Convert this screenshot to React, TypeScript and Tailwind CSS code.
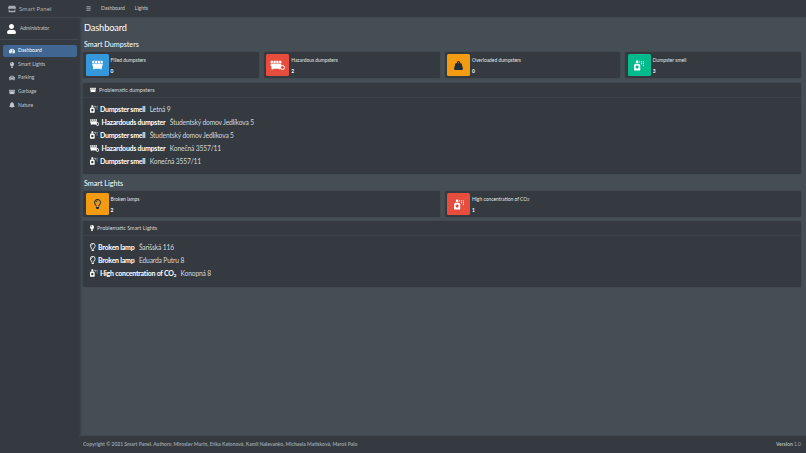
import type { ReactNode } from 'react';
import {
  FaBars,
  FaBell,
  FaCar,
  FaDumpster,
  FaLightbulb,
  FaRegLightbulb,
  FaSprayCan,
  FaStore,
  FaTachometerAlt,
  FaUser,
  FaWeightHanging,
} from 'react-icons/fa';

function HazardIcon({ className }: { className?: string }) {
  return (
    <span className={`relative inline-flex ${className ?? ''}`}>
      <FaDumpster className="h-full w-[80%]" />
      <span className="absolute bottom-0 right-0 h-[50%] w-[38%] rounded-full border border-current" />
    </span>
  );
}

const navItems = [
  { label: 'Dashboard', icon: FaTachometerAlt, active: true },
  { label: 'Smart Lights', icon: FaLightbulb },
  { label: 'Parking', icon: FaCar },
  { label: 'Garbage', icon: FaDumpster },
  { label: 'Nature', icon: FaBell },
];

function Sidebar() {
  return (
    <aside className="flex h-full w-[79px] shrink-0 flex-col bg-[#343a40] shadow-[1px_0_3px_rgba(0,0,0,0.35)]">
      <div className="flex h-[18px] items-center gap-[3px] border-b border-[#414950] pl-[8px] text-[#a8adb2]">
        <FaStore className="h-[10px] w-[8px]" />
        <span className="text-[6.2px]">Smart Panel</span>
      </div>
      <div className="flex h-[22px] items-center gap-[4px] border-b border-[#414950] pl-[7px] text-[#c2c7d0]">
        <FaUser className="h-[10px] w-[9px] text-white" />
        <span className="text-[4.9px]">Administrator</span>
      </div>
      <nav className="mt-[5px] flex flex-col gap-[1.6px] px-[2.5px]">
        {navItems.map((item) => {
          const Icon = item.icon;
          return (
            <div
              key={item.label}
              className={`flex h-[12px] items-center gap-[3.5px] rounded-[2px] pl-[6px] text-[5px] ${
                item.active ? 'bg-[#3f6791] text-white' : 'text-[#c2c7d0]'
              }`}
            >
              <Icon className="h-[6px] w-[6px]" />
              <span>{item.label}</span>
            </div>
          );
        })}
      </nav>
    </aside>
  );
}

function TopBar() {
  return (
    <header className="flex h-[18px] shrink-0 items-center border-b border-[#414950] bg-[#343a40] pl-[7px] text-[5px] text-[rgba(255,255,255,0.75)]">
      <FaBars className="mr-[10px] h-[5px] w-[5px]" />
      <span className="mr-[10px]">Dashboard</span>
      <span>Lights</span>
    </header>
  );
}

function InfoBox({
  color,
  icon,
  title,
  value,
}: {
  color: string;
  icon: ReactNode;
  title: ReactNode;
  value: number;
}) {
  return (
    <div className="flex h-[26px] min-w-0 flex-1 items-center rounded-[2px] bg-[#343a40] pl-[2.5px] shadow-[0_0_1px_rgba(0,0,0,0.4)]">
      <div className={`flex h-[22px] w-[23px] shrink-0 items-center justify-center rounded-[1.5px] ${color}`}>
        {icon}
      </div>
      <div className="ml-[2px] flex flex-col gap-[5px] text-[4.9px] leading-[6px] text-white">
        <span className="text-[#e3e5e7]">{title}</span>
        <span className="font-bold">{value}</span>
      </div>
    </div>
  );
}

function ProblemRow({ icon, title, place }: { icon: ReactNode; title: ReactNode; place: string }) {
  return (
    <div className="flex h-[13px] items-center text-white">
      <span className="mr-[2.5px] flex">{icon}</span>
      <span className="mr-[4.5px] text-[7px] font-bold tracking-[-0.25px]">{title}</span>
      <span className="text-[6.7px] tracking-[-0.15px] text-[#d6d8da]">{place}</span>
    </div>
  );
}

function ProblemCard({
  icon,
  title,
  height,
  children,
}: {
  icon: ReactNode;
  title: string;
  height: string;
  children: ReactNode;
}) {
  return (
    <section className={`rounded-[2px] bg-[#343a40] shadow-[0_0_1px_rgba(0,0,0,0.4)] ${height}`}>
      <div className="flex h-[15px] items-center gap-[3px] border-b border-[#3b4248] pl-[7px] text-[5.5px] text-[#d5d7d9]">
        {icon}
        <span>{title}</span>
      </div>
      <div className="flex flex-col pl-[7px] pt-[4.5px]">{children}</div>
    </section>
  );
}

const smellIcon = <FaSprayCan className="h-[8px] w-[7.5px] text-white" />;
const hazardIcon = <HazardIcon className="h-[8px] w-[9px] text-white" />;
const bulbIcon = <FaRegLightbulb className="h-[8px] w-[5.5px] text-white" />;

export default function App() {
  return (
    <div className="flex h-[453px] w-[806px] overflow-hidden bg-[#454d55] font-['Lato','Liberation_Sans',sans-serif]">
      <Sidebar />
      <div className="flex min-w-0 flex-1 flex-col">
        <TopBar />
        <main className="flex flex-1 flex-col pl-[4px] pr-[5px]">
          <h1 className="mt-[3px] pl-px text-[9.2px] leading-[13px] tracking-[-0.1px] text-white">Dashboard</h1>
          <h2 className="mt-[6px] pl-px text-[7.2px] leading-[10px] text-white">Smart Dumpsters</h2>
          <div className="mt-[2px] flex gap-[5px]">
            <InfoBox color="bg-[#3498db]" icon={<FaDumpster className="h-[10px] w-[11px] text-white" />} title="Filled dumpsters" value={0} />
            <InfoBox color="bg-[#e74c3c]" icon={<HazardIcon className="h-[10px] w-[15px] text-white" />} title="Hazardous dumpsters" value={2} />
            <InfoBox color="bg-[#f39c12]" icon={<FaWeightHanging className="h-[9px] w-[9px] text-[#1f2d3d]" />} title="Overloaded dumpsters" value={0} />
            <InfoBox color="bg-[#00bc8c]" icon={<FaSprayCan className="h-[11px] w-[10px] text-white" />} title="Dumpster smell" value={3} />
          </div>
          <div className="mt-[5px]">
            <ProblemCard icon={<FaDumpster className="h-[6px] w-[6px] text-white" />} title="Problematic dumpsters" height="h-[91px]">
              <ProblemRow icon={smellIcon} title="Dumpster smell" place="Letná 9" />
              <ProblemRow icon={hazardIcon} title="Hazardouds dumpster" place="Študentský domov Jedlíkova 5" />
              <ProblemRow icon={smellIcon} title="Dumpster smell" place="Študentský domov Jedlíkova 5" />
              <ProblemRow icon={hazardIcon} title="Hazardouds dumpster" place="Konečná 3557/11" />
              <ProblemRow icon={smellIcon} title="Dumpster smell" place="Konečná 3557/11" />
            </ProblemCard>
          </div>
          <h2 className="mt-[5px] pl-px text-[7.2px] leading-[10px] text-white">Smart Lights</h2>
          <div className="mt-[2px] flex gap-[5px]">
            <InfoBox color="bg-[#f39c12]" icon={<FaRegLightbulb className="h-[10px] w-[7px] text-[#1f2d3d]" />} title="Broken lamps" value={2} />
            <InfoBox
              color="bg-[#e74c3c]"
              icon={<FaSprayCan className="h-[11px] w-[10px] text-white" />}
              title={<>High concentration of CO<sub className="text-[3.5px]">2</sub></>}
              value={1}
            />
          </div>
          <div className="mt-[4px]">
            <ProblemCard icon={<FaLightbulb className="h-[6px] w-[4px] text-white" />} title="Problematic Smart Lights" height="h-[66px]">
              <ProblemRow icon={bulbIcon} title="Broken lamp" place="Šarišská 116" />
              <ProblemRow icon={bulbIcon} title="Broken lamp" place="Eduarda Putru 8" />
              <ProblemRow
                icon={smellIcon}
                title={<>High concentration of CO<sub className="text-[4.5px]">2</sub></>}
                place="Konopná 8"
              />
            </ProblemCard>
          </div>
        </main>
        <footer className="flex h-[18px] shrink-0 items-center justify-between border-t border-[#414950] bg-[#343a40] pl-[4px] pr-[5px] text-[5px] text-[#9aa0a6]">
          <span className="font-bold">Copyright © 2021 Smart Panel. Authors: Miroslav Murin, Erika Katonová, Kamil Nalevanko, Michaela Matisková, Maroš Palo</span>
          <span><b className="text-[#b0b4b8]">Version</b> 1.0</span>
        </footer>
      </div>
    </div>
  );
}
